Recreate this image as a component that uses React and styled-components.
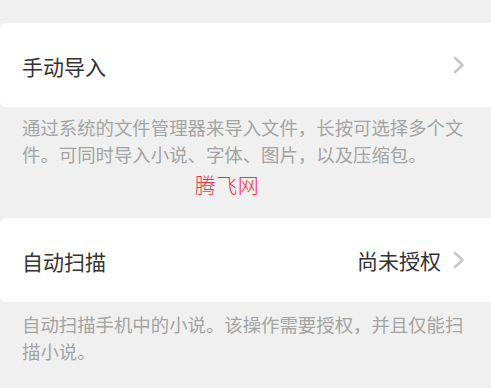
import styled, { createGlobalStyle } from 'styled-components';

const GlobalStyle = createGlobalStyle`
  html, body {
    margin: 0;
    padding: 0;
    background: #f0f0f0;
  }
  body {
    font-family: "Noto Sans CJK SC", "Noto Sans", sans-serif;
  }
`;

function Chevron() {
  return (
    <ChevronIcon viewBox="0 0 12 18" aria-hidden="true">
      <path d="M2 2 L9.5 9 L2 16" fill="none" stroke="#c7c7c7" strokeWidth="2.6" strokeLinecap="round" strokeLinejoin="round" />
    </ChevronIcon>
  );
}

function SettingRow({ title, value }) {
  return (
    <Card>
      <Title>{title}</Title>
      <RowEnd>
        {value && <Value>{value}</Value>}
        <Chevron />
      </RowEnd>
    </Card>
  );
}

export default function App() {
  return (
    <>
      <GlobalStyle />
      <Page>
        <Section>
          <SettingRow title="手动导入" />
          <Hint>通过系统的文件管理器来导入文件，长按可选择多个文件。可同时导入小说、字体、图片，以及压缩包。</Hint>
        </Section>
        <Watermark>腾飞网</Watermark>
        <Section $gap>
          <SettingRow title="自动扫描" value="尚未授权" />
          <Hint $top={9}>自动扫描手机中的小说。该操作需要授权，并且仅能扫描小说。</Hint>
        </Section>
      </Page>
    </>
  );
}

const Page = styled.div`
  display: flex;
  flex-direction: column;
  width: 491px;
  min-height: 388px;
  padding-top: 23px;
  box-sizing: border-box;
  background: #f0f0f0;
  overflow: hidden;
`;

const Section = styled.section`
  display: flex;
  flex-direction: column;
  margin-top: ${({ $gap }) => ($gap ? '22px' : '0')};
`;

const Card = styled.div`
  display: flex;
  justify-content: space-between;
  align-items: center;
  height: 84px;
  padding: 0 26px 0 22px;
  border-radius: 6px 0 0 6px;
  background: #ffffff;
`;

const Title = styled.span`
  color: #333333;
  font-size: 21px;
  line-height: 28px;
  margin-top: 2px;
`;

const RowEnd = styled.div`
  display: flex;
  align-items: center;
  gap: 12px;
`;

const Value = styled.span`
  color: #333333;
  font-size: 21px;
  line-height: 28px;
`;

const ChevronIcon = styled.svg`
  width: 12px;
  height: 18px;
  flex-shrink: 0;
`;

const Hint = styled.p`
  margin: 0;
  padding: ${({ $top }) => $top ?? 7}px 24px 0 22px;
  color: #a4a4a4;
  font-size: 18.4px;
  line-height: 27px;
`;

const Watermark = styled.div`
  margin-top: 4px;
  padding-right: 37px;
  text-align: center;
  color: #f0304e;
  font-size: 21px;
  font-weight: 300;
  line-height: 24px;
  letter-spacing: 0.5px;
`;
